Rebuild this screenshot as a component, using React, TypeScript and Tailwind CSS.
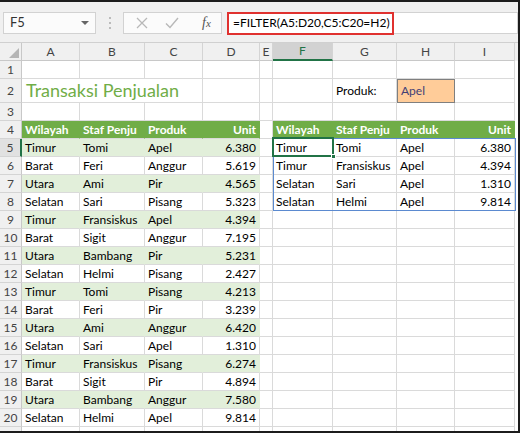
import React from 'react';

type Cell = { v?: string; right?: boolean; cls?: string };

const colW = ['w-[58px]', 'w-[65px]', 'w-[58px]', 'w-[57px]', 'w-[13px]', 'w-[60px]', 'w-[64px]', 'w-[58px]', 'w-[60px]'];
const letters = ['A', 'B', 'C', 'D', 'E', 'F', 'G', 'H', 'I'];

const sales: string[][] = [
  ['Timur', 'Tomi', 'Apel', '6.380'],
  ['Barat', 'Feri', 'Anggur', '5.619'],
  ['Utara', 'Ami', 'Pir', '4.565'],
  ['Selatan', 'Sari', 'Pisang', '5.323'],
  ['Timur', 'Fransiskus', 'Apel', '4.394'],
  ['Barat', 'Sigit', 'Anggur', '7.195'],
  ['Utara', 'Bambang', 'Pir', '5.231'],
  ['Selatan', 'Helmi', 'Pisang', '2.427'],
  ['Timur', 'Tomi', 'Pisang', '4.213'],
  ['Barat', 'Feri', 'Pir', '3.239'],
  ['Utara', 'Ami', 'Anggur', '6.420'],
  ['Selatan', 'Sari', 'Apel', '1.310'],
  ['Timur', 'Fransiskus', 'Pisang', '6.274'],
  ['Barat', 'Sigit', 'Pir', '4.894'],
  ['Utara', 'Bambang', 'Anggur', '7.580'],
  ['Selatan', 'Helmi', 'Apel', '9.814'],
];

const filtered: string[][] = [
  ['Timur', 'Tomi', 'Apel', '6.380'],
  ['Timur', 'Fransiskus', 'Apel', '4.394'],
  ['Selatan', 'Sari', 'Apel', '1.310'],
  ['Selatan', 'Helmi', 'Apel', '9.814'],
];

// the sheet clips "Staf Penjualan" at the column edge
const headers = ['Wilayah', 'Staf Penju', 'Produk', 'Unit'];
const greenHead = 'bg-[#70ad47] border-r-[#70ad47] text-white font-bold';
const band = 'bg-[#e2efda] border-r-[#e2efda]';

const empty = (): Cell => ({});

const buildRow = (r: number): Cell[] => {
  const cells: Cell[] = Array.from({ length: 9 }, empty);
  if (r === 4) {
    headers.forEach((h, i) => {
      cells[i] = { v: h, right: i === 3, cls: greenHead };
      cells[i + 5] = { v: h, right: i === 3, cls: greenHead };
    });
  }
  if (r >= 5 && r <= 20) {
    sales[r - 5].forEach((v, i) => {
      cells[i] = { v, right: i === 3, cls: r % 2 === 1 ? band : '' };
    });
  }
  if (r >= 5 && r <= 8) {
    filtered[r - 5].forEach((v, i) => {
      cells[i + 5] = { v, right: i === 3 };
    });
  }
  return cells;
};

const RowHead = ({ n, active }: { n?: number; active?: boolean }) => (
  <div
    className={`w-[22px] shrink-0 flex items-center justify-center border-b border-[#d4d4d4] text-[12px] text-[#444] ${
      active ? 'bg-[#e1e1e1] border-r-2 border-r-[#217346]' : 'bg-[#f0f0f0] border-r border-r-[#c8c8c8]'
    }`}
  >
    {n}
  </div>
);

const CellBox = ({ c, w }: { c: Cell; w: string }) => (
  <div
    className={`${w} shrink-0 overflow-hidden whitespace-nowrap border-r border-b border-[#dadada] flex items-center px-[3px] text-[12px] text-black ${
      c.right ? 'justify-end' : ''
    } ${c.cls ?? ''}`}
  >
    {c.v}
  </div>
);

const XIcon = () => (
  <svg width="12" height="12" viewBox="0 0 12 12" fill="none" stroke="#b8b8b8" strokeWidth="1.3">
    <path d="M1 1l10 10M11 1L1 11" />
  </svg>
);

const CheckIcon = () => (
  <svg width="14" height="12" viewBox="0 0 14 12" fill="none" stroke="#b8b8b8" strokeWidth="1.4">
    <path d="M1 6.5l4 4L13 1" />
  </svg>
);

export default function App() {
  const rows = Array.from({ length: 21 }, (_, i) => i + 1);

  return (
    <div className="w-[520px] h-[433px] overflow-hidden bg-white border-t-2 border-r-2 border-b-2 border-[#1c1c1c] font-['Lato','Liberation_Sans',sans-serif]">
      {/* formula bar */}
      <div className="h-[41px] bg-[#f0f0f0] flex items-center pl-[3px] pt-[1px] border-b border-[#d0d0d0]">
        <div className="w-[93px] h-[22px] bg-[#fbfbfb] border border-[#d2d2d2] flex items-center justify-between pl-[6px] pr-[6px] text-[13px] text-[#333]">
          <span>F5</span>
          <span className="w-0 h-0 border-l-[4px] border-r-[4px] border-t-[4px] border-l-transparent border-r-transparent border-t-[#666]" />
        </div>
        <div className="w-[27px] flex flex-col items-center gap-[3px]">
          <span className="w-[2px] h-[2px] bg-[#aaa] rounded-full" />
          <span className="w-[2px] h-[2px] bg-[#aaa] rounded-full" />
          <span className="w-[2px] h-[2px] bg-[#aaa] rounded-full" />
        </div>
        <div className="w-[99px] h-[22px] bg-[#fbfbfb] border border-[#d2d2d2] flex items-center pl-[12px] gap-[17px]">
          <XIcon />
          <CheckIcon />
          <span className="font-['Liberation_Serif',serif] italic text-[14px] text-[#555] ml-[6px]">
            f<span className="text-[11px]">x</span>
          </span>
        </div>
        <div className="ml-[5px] flex-1 h-[22px] bg-white border border-[#d2d2d2] relative">
          <div className="absolute left-[-1px] top-[-1px] w-[167px] h-[23px] border-2 border-[#e0312f] flex items-center pl-[4px] text-[12px] text-black whitespace-nowrap">
            =FILTER(A5:D20,C5:C20=H2)
          </div>
        </div>
      </div>

      {/* sheet */}
      <div className="relative">
        <div className="flex h-[18px] bg-[#f0f0f0] text-[12px] text-[#444]">
          <div className="w-[22px] shrink-0 border-r border-b border-[#c8c8c8] flex items-end justify-end p-[2px]">
            <svg width="10" height="10" viewBox="0 0 10 10">
              <path d="M10 0V10H0Z" fill="#b5b5b5" />
            </svg>
          </div>
          {letters.map((l, i) => (
            <div
              key={l}
              className={`${colW[i]} shrink-0 flex items-center justify-center border-r border-[#d4d4d4] ${
                l === 'F' ? 'bg-[#d2d2d2] border-b-2 border-b-[#217346] text-[#217346]' : 'border-b border-b-[#c8c8c8]'
              }`}
            >
              {l}
            </div>
          ))}
        </div>

        {rows.map(r => {
          const h = r === 2 ? 'h-[24px]' : 'h-[18px]';
          if (r === 2) {
            return (
              <div key={r} className={`flex ${h}`}>
                <RowHead n={r} />
                <div className="w-[181px] shrink-0 border-r border-b border-[#dadada] flex items-center pl-[4px] text-[18px] text-[#70ad47] whitespace-nowrap">
                  Transaksi Penjualan
                </div>
                <CellBox c={{}} w={colW[3]} />
                <CellBox c={{}} w={colW[4]} />
                <CellBox c={{}} w={colW[5]} />
                <CellBox c={{ v: 'Produk:' }} w={colW[6]} />
                <div className="w-[58px] shrink-0 bg-[#ffcc99] border border-[#7f7f7f] flex items-center px-[3px] text-[12px] text-[#3f3f76]">
                  Apel
                </div>
                <CellBox c={{}} w={colW[8]} />
              </div>
            );
          }
          const cells = buildRow(r);
          return (
            <div key={r} className={`flex ${h}`}>
              <RowHead n={r < 21 ? r : undefined} active={r === 5} />
              {cells.map((c, i) => (
                <CellBox key={i} c={c} w={colW[i]} />
              ))}
            </div>
          );
        })}

        {/* spill range outline */}
        <div className="absolute left-[273px] top-[95px] w-[243px] h-[73px] border border-[#5b8ad0] pointer-events-none" />
        {/* active cell */}
        <div className="absolute left-[272px] top-[94px] w-[62px] h-[20px] border-2 border-[#217346] pointer-events-none">
          <span className="absolute right-[-4px] bottom-[-4px] w-[5px] h-[5px] bg-[#217346] border border-white" />
        </div>
      </div>
    </div>
  );
}
